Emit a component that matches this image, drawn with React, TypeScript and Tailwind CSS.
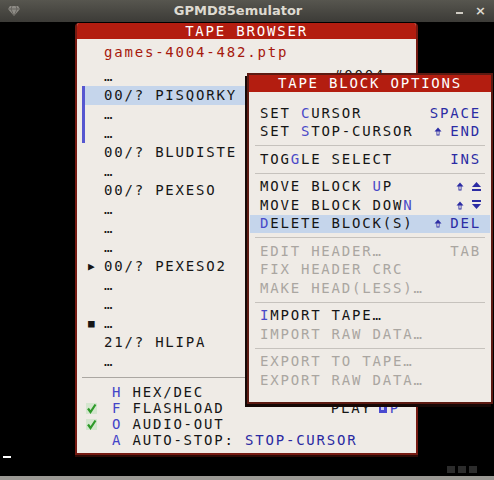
import type { ReactNode } from 'react'

const mono = "font-['DejaVu_Sans_Mono',monospace] text-[14px] tracking-[1.8px]"

function ShiftArrow() {
  return (
    <svg width="8" height="9" viewBox="0 0 8 9" className="inline-block">
      <path d="M4 0.5 L7.5 4.5 L5.5 4.5 L5.5 8.5 L2.5 8.5 L2.5 4.5 L0.5 4.5 Z" fill="#2c2ca4" />
      <rect x="3.3" y="4.5" width="1.4" height="3" fill="#efebe6" />
    </svg>
  )
}

function BlockUp() {
  return (
    <svg width="9" height="10" viewBox="0 0 9 10" className="inline-block">
      <path d="M4.5 0 L9 5 L0 5 Z" fill="#2c2ca4" />
      <rect x="0" y="7" width="9" height="2" fill="#2c2ca4" />
    </svg>
  )
}

function BlockDown() {
  return (
    <svg width="9" height="10" viewBox="0 0 9 10" className="inline-block">
      <rect x="0" y="0" width="9" height="2" fill="#2c2ca4" />
      <path d="M0 4 L9 4 L4.5 9 Z" fill="#2c2ca4" />
    </svg>
  )
}

function Check() {
  return (
    <svg width="11" height="11" viewBox="0 0 11 11">
      <rect width="11" height="11" fill="#d5e6cf" />
      <path d="M2 5.5 L4.5 9 L9.5 1.5" stroke="#2f9a2a" strokeWidth="2.2" fill="none" />
    </svg>
  )
}

type MenuItem = {
  pre: string
  key: string
  post: string
  sc?: ReactNode
  dim?: boolean
  hl?: boolean
}

function MenuRow({ item }: { item: MenuItem }) {
  return (
    <div className={`h-[18.5px] mx-[1px] pl-[10px] pr-[9px] flex items-center justify-between ${item.hl ? 'bg-[#c5d5eb]' : ''}`}>
      {item.dim
        ? (
            <span className="text-[#aaa6a1]">{item.pre}{item.key}{item.post}</span>
          )
        : (
            <span className="text-[#151515]">
              {item.pre}
              <span className="text-[#4a4ac8]">{item.key}</span>
              {item.post}
            </span>
          )}
      {item.sc && (
        <span className={`flex items-center gap-[8px] ${item.dim ? 'text-[#aaa6a1]' : 'text-[#2c2ca4]'}`}>
          {item.sc}
        </span>
      )}
    </div>
  )
}

function Sep() {
  return <div className="mx-[6px] my-[4px] h-px bg-[#c6c2bd]" />
}

function TapeMenu() {
  return (
    <div className={`absolute left-[247px] top-[51px] w-[246px] bg-[#efebe6] border-2 border-[#5c1a12] shadow-[-2px_3px_0_#160806] ${mono}`}>
      <div className="h-[17px] bg-[#b31d10] text-white leading-[17px] text-center">TAPE BLOCK OPTIONS</div>
      <div className="pt-[12px] pb-[12px]">
        <MenuRow item={{ pre: 'SET ', key: 'C', post: 'URSOR', sc: 'SPACE' }} />
        <MenuRow item={{ pre: 'SET ', key: 'S', post: 'TOP-CURSOR', sc: <><ShiftArrow />END</> }} />
        <Sep />
        <MenuRow item={{ pre: 'TOG', key: 'G', post: 'LE SELECT', sc: 'INS' }} />
        <Sep />
        <MenuRow item={{ pre: 'MOVE BLOCK ', key: 'U', post: 'P', sc: <><ShiftArrow /><BlockUp /></> }} />
        <MenuRow item={{ pre: 'MOVE BLOCK DOW', key: 'N', post: '', sc: <><ShiftArrow /><BlockDown /></> }} />
        <MenuRow item={{ pre: '', key: 'D', post: 'ELETE BLOCK(S)', sc: <><ShiftArrow />DEL</>, hl: true }} />
        <Sep />
        <MenuRow item={{ pre: 'EDIT HEADER…', key: '', post: '', sc: 'TAB', dim: true }} />
        <MenuRow item={{ pre: 'FIX HEADER CRC', key: '', post: '', dim: true }} />
        <MenuRow item={{ pre: 'MAKE HEAD(LESS)…', key: '', post: '', dim: true }} />
        <Sep />
        <MenuRow item={{ pre: '', key: 'I', post: 'MPORT TAPE…' }} />
        <MenuRow item={{ pre: 'IMPORT RAW DATA…', key: '', post: '', dim: true }} />
        <Sep />
        <MenuRow item={{ pre: 'EXPORT TO TAPE…', key: '', post: '', dim: true }} />
        <MenuRow item={{ pre: 'EXPORT RAW DATA…', key: '', post: '', dim: true }} />
      </div>
    </div>
  )
}

type ListRow = { t: string, hl?: boolean, bar?: boolean, mark?: string, extra?: boolean }

const rows: ListRow[] = [
  { t: '…', extra: true },
  { t: '00/? PISQORKY', hl: true, bar: true },
  { t: '…', bar: true },
  { t: '…', bar: true },
  { t: '00/? BLUDISTE' },
  { t: '…' },
  { t: '00/? PEXESO' },
  { t: '…' },
  { t: '…' },
  { t: '…' },
  { t: '00/? PEXESO2', mark: '▶' },
  { t: '…' },
  { t: '…' },
  { t: '…', mark: '■' },
  { t: '21/? HLIPA' },
  { t: '…' },
]

function TapeBrowser() {
  return (
    <div className={`mt-[1px] ml-[75px] w-[343px] h-[432px] flex flex-col bg-[#efebe6] border-x-2 border-b-2 border-[#761a12] rounded-t-[4px] overflow-hidden shadow-[0_2px_0_#2a0a06] ${mono}`}>
      <div className="h-[16px] bg-[#b31d10] text-white leading-[16px] text-center shrink-0">TAPE BROWSER</div>

      <div className="pt-[4px] pl-[27px] h-[23px] leading-[19px] text-[#a6190d]">games-4004-482.ptp</div>

      {/* block list */}
      <div className="mt-[5px] pl-[5px] pr-[6px] flex flex-col">
        {rows.map((r, i) => (
          <div key={i} className="h-[19px] flex">
            <div className={`w-[3px] ${r.bar ? 'bg-[#5656d0]' : ''}`} />
            <div className={`flex-1 flex items-center leading-[19px] text-[#161616] ${r.hl ? 'bg-[#c5d5eb]' : ''}`}>
              <span className="w-[19px] pl-[3px] text-[11px] tracking-normal">{r.mark ?? ''}</span>
              <span className="w-[230px]">{r.t}</span>
              {r.extra && <span className="relative -top-[1px] text-[#161616]">#0004</span>}
            </div>
          </div>
        ))}
      </div>

      <div className="mt-[6px] mx-[5px] h-px bg-[#aba7a2]" />

      {/* options */}
      <div className="mt-[6px] flex flex-col text-[#161616]">
        <div className="h-[16px] flex items-center">
          <span className="w-[35px]" />
          <span><span className="text-[#4444c8]">H</span> HEX/DEC</span>
        </div>
        <div className="h-[16px] flex items-center justify-between pr-[16px]">
          <div className="flex items-center">
            <span className="w-[35px] pl-[9px]"><Check /></span>
            <span><span className="text-[#4444c8]">F</span> FLASHLOAD</span>
          </div>
          <div className="flex items-center">
            PLAY
            <span className="ml-[7px] w-[8px] h-[10px] bg-[#4a4ad0] flex items-center justify-center">
              <span className="w-[3px] h-[4px] bg-[#c8c8f0]" />
            </span>
            <span className="ml-[3px] text-[#4444c8]">P</span>
          </div>
        </div>
        <div className="h-[16px] flex items-center">
          <span className="w-[35px] pl-[9px]"><Check /></span>
          <span><span className="text-[#4444c8]">O</span> AUDIO-OUT</span>
        </div>
        <div className="h-[16px] flex items-center">
          <span className="w-[35px]" />
          <span>
            <span className="text-[#4444c8]">A</span>
            {' AUTO-STOP: '}
            <span className="text-[#2a2aa2]">STOP-CURSOR</span>
          </span>
        </div>
      </div>
    </div>
  )
}

function TitleBar() {
  return (
    <div className="h-[22px] shrink-0 flex items-center justify-between px-[8px] bg-gradient-to-b from-[#57564f] to-[#3c3b37] font-['DejaVu_Sans',sans-serif]">
      <svg width="12" height="10" viewBox="0 0 12 10">
        <path d="M2 0 L10 0 L12 3 L6 10 L0 3 Z" fill="#8e8c86" />
        <path d="M0 3 L12 3 M4 0 L3 3 L6 10 L9 3 L8 0" stroke="#5e5c57" strokeWidth="0.8" fill="none" />
      </svg>
      <span className="text-[13px] font-bold text-[#dedad1]">GPMD85emulator</span>
      <div className="flex items-center gap-[12px] text-[#dedad1] text-[13px] font-bold">
        <span className="w-[7px] h-[2px] bg-[#cfcbc3] mt-[3px]" />
        <span>×</span>
      </div>
    </div>
  )
}

export default function App() {
  return (
    <div className="w-[494px] h-[480px] flex flex-col bg-black overflow-hidden">
      <TitleBar />

      <div className="relative flex-1 flex flex-col">
        <TapeBrowser />

        {/* emulator status line */}
        <div className="flex-1 flex justify-between items-start">
          <div className="mt-[1px] ml-[3px] w-[8px] h-[2px] bg-white" />
          <div className="mt-[11px] mr-[17px] flex gap-[3px]">
            <div className="w-[8px] h-[7px] bg-[#2c2c2c]" />
            <div className="w-[8px] h-[7px] bg-[#2c2c2c]" />
            <div className="w-[8px] h-[7px] bg-[#2c2c2c]" />
          </div>
        </div>

        <TapeMenu />
      </div>

      <div className="h-[4px] shrink-0 bg-[#9b9994]" />
    </div>
  )
}
